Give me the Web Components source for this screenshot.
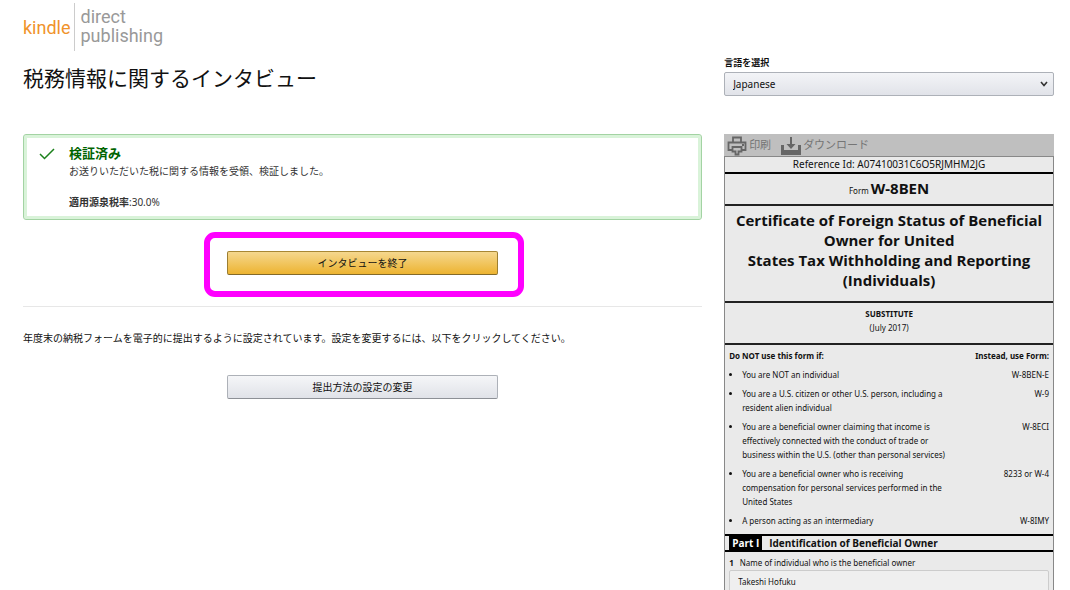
<!DOCTYPE html>
<html lang="ja">
<head>
<meta charset="utf-8">
<title>税務情報に関するインタビュー</title>
<style>
  html {
    scrollbar-width: none;
  }

  body {
    margin: 0;
    background: #fff;
    color: #111;
    font: 10px/14px "Noto Sans", "Noto Sans CJK JP", sans-serif;
  }
</style>
</head>
<body>
<tax-interview>
  <kdp-logo slot="logo"></kdp-logo>
  <span slot="title">税務情報に関するインタビュー</span>
  <language-select slot="language" label="言語を選択"></language-select>

  <status-box heading="検証済み">
    お送りいただいた税に関する情報を受領、検証しました。
    <span slot="detail"><b>適用源泉税率</b>:30.0%</span>
  </status-box>
  <action-button kind="primary" marked>インタビューを終了</action-button>
  <section-note>年度末の納税フォームを電子的に提出するように設定されています。設定を変更するには、以下をクリックしてください。</section-note>
  <action-button>提出方法の設定の変更</action-button>

  <form-toolbar slot="form"></form-toolbar>
  <form-preview slot="form"></form-preview>
</tax-interview>

<script>
class KdpLogo extends HTMLElement {
  constructor() {
    super();
    this.attachShadow({ mode: "open" });
  }

  connectedCallback() {
    this.shadowRoot.innerHTML = `
    <style>
      :host {
        display: flex;
        align-items: center;
        height: 48px;
        font-family: Roboto, sans-serif;
        font-size: 18px;
        line-height: 19px;
        color: #999;
      }

      .kindle {
        color: #f0932b;
        padding-right: 3px;
      }

      .rest {
        box-sizing: border-box;
        height: 48px;
        border-left: 1px solid #ccc;
        padding: 4px 0 0 6px;
      }
    </style>
    <span class="kindle">kindle</span>
    <span class="rest">direct<br>publishing</span>
  `;
  }
}

class LanguageSelect extends HTMLElement {
  constructor() {
    super();
    this.attachShadow({ mode: "open" });
  }

  connectedCallback() {
    this.shadowRoot.innerHTML = `
    <style>
      :host {
        display: block;
        padding-top: 1px;
      }

      label {
        display: block;
        font-size: 9px;
        font-weight: bold;
        margin-bottom: 2px;
      }

      .wrap {
        display: grid;
        align-items: center;
      }

      select, svg {
        grid-area: 1 / 1;
      }

      select {
        appearance: none;
        box-sizing: border-box;
        width: 100%;
        height: 24px;
        padding: 0 8px;
        border: 1px solid #adb1b8;
        border-radius: 2px;
        background: linear-gradient(#f3f4f7, #e1e3e9);
        color: #111;
        font: inherit;
      }

      svg {
        justify-self: end;
        margin-right: 6px;
        pointer-events: none;
      }
    </style>
    <label for="lang">${this.getAttribute("label")}</label>
    <div class="wrap">
      <select id="lang"><option>Japanese</option></select>
      <svg width="8" height="6" viewBox="0 0 8 6"><path d="M1 1l3 3.5L7 1" fill="none" stroke="#333" stroke-width="1.6"/></svg>
    </div>
  `;
  }
}

class StatusBox extends HTMLElement {
  constructor() {
    super();
    this.attachShadow({ mode: "open" });
  }

  connectedCallback() {
    this.shadowRoot.innerHTML = `
    <style>
      :host {
        display: flex;
        gap: 14px;
        box-sizing: border-box;
        padding: 8px 15px 10px;
        border: 1px solid #a3d3a3;
        border-radius: 3px;
        box-shadow: inset 0 0 0 3px #d9f3d9;
      }

      svg {
        margin-top: 5px;
      }

      h2 {
        margin: 0;
        font-size: 13px;
        line-height: 20px;
        color: #006400;
      }

      p {
        margin: 0 0 16px;
        line-height: 16px;
      }

      p, div {
        color: #333;
      }
    </style>
    <svg width="16" height="12" viewBox="0 0 16 12"><path d="M1 6l4.500 4.500L15 1" fill="none" stroke="#1b801b" stroke-width="1.500"/></svg>
    <section>
      <h2>${this.getAttribute("heading")}</h2>
      <p><slot></slot></p>
      <div><slot name="detail"></slot></div>
    </section>
  `;
  }
}

class ActionButton extends HTMLElement {
  constructor() {
    super();
    this.attachShadow({ mode: "open" });
  }

  connectedCallback() {
    this.shadowRoot.innerHTML = `
    <style>
      :host {
        display: block;
        position: relative;
        width: 40%;
        margin: 0 auto;
      }

      button {
        display: block;
        box-sizing: border-box;
        width: 100%;
        height: 24px;
        padding: 0;
        border: 1px solid #adb1b8;
        border-bottom-color: #8d9096;
        border-radius: 2px;
        background: linear-gradient(#f5f6f8, #e0e2e8);
        color: #111;
        font: inherit;
      }

      :host([kind="primary"]) button {
        border-color: #a88734 #9c7e31 #846a29;
        background: linear-gradient(#f5d78e, #edb431);
      }

      /* highlighter frame drawn over the page around the button */
      :host([marked])::after {
        content: "";
        position: absolute;
        inset: -19px -26px -22px -23px;
        border: 6px solid #f0f;
        border-radius: 11px;
        pointer-events: none;
      }
    </style>
    <button type="button"><slot></slot></button>
  `;
  }
}

class SectionNote extends HTMLElement {
  constructor() {
    super();
    this.attachShadow({ mode: "open" });
  }

  connectedCallback() {
    this.shadowRoot.innerHTML = `
    <style>
      :host {
        display: block;
        margin: 31px 0 30px;
        padding-top: 24px;
        border-top: 1px solid #e7e7e7;
      }
    </style>
    <slot></slot>
  `;
  }
}

class FormToolbar extends HTMLElement {
  constructor() {
    super();
    this.attachShadow({ mode: "open" });
  }

  connectedCallback() {
    this.shadowRoot.innerHTML = `
    <style>
      :host {
        display: flex;
        gap: 10px;
        height: 22px;
        padding-left: 3px;
        background: #bfbfbf;
      }

      a {
        display: flex;
        gap: 2px;
        color: #757575;
        font-size: 11px;
        line-height: 21px;
        text-decoration: none;
      }

      svg {
        margin-top: 2px;
      }
    </style>
    <a href="#print">
      <svg width="20" height="20" viewBox="0 0 20 20" fill="none" stroke="#666" stroke-width="1.800">
        <path d="M6 6V1.500h8V6M5.500 14H1.500V6.500h17V14H14M5.500 11h9v4.500H11.500V18.500h-3V15.500h-3z"/>
        <path d="M15 9h2"/>
      </svg>印刷</a>
    <a href="#download">
      <svg width="20" height="20" viewBox="0 0 20 20" fill="#666">
        <path d="M0 9h3v5h14V9h3v10H0zM9 1h2v7h3.500L10 13 5.500 8H9z"/>
      </svg>ダウンロード</a>
  `;
  }
}

class FormPreview extends HTMLElement {
  constructor() {
    super();
    this.attachShadow({ mode: "open" });
    this.rows = [
      ["You are NOT an individual", "W-8BEN-E"],
      ["You are a U.S. citizen or other U.S. person, including a resident alien individual", "W-9"],
      ["You are a beneficial owner claiming that income is effectively connected with the conduct of trade or business within the U.S. (other than personal services)", "W-8ECI"],
      ["You are a beneficial owner who is receiving compensation for personal services performed in the United States", "8233 or W-4"],
      ["A person acting as an intermediary", "W-8IMY"],
    ];
  }

  connectedCallback() {
    const rows = this.rows
      .map(([text, form]) => `<tr><td><ul><li>${text}</li></ul></td><td>${form}</td></tr>`)
      .join("");

    this.shadowRoot.innerHTML = `
    <style>
      :host {
        display: block;
        border: 1px solid #888;
        background: #eaeaea;
        color: #111;
        font-size: 8px;
      }

      .ref, .form, h2, .sub {
        margin: 0;
        text-align: center;
        border-bottom: 2px solid #222;
      }

      .ref {
        font-size: 10px;
        line-height: 15px;
        border-color: #000;
      }

      .form {
        padding: 3px 0 2px;
        line-height: 22px;
      }

      .form b {
        font-size: 15px;
      }

      h2 {
        padding: 4px 8px 11px;
        font-family: "Open Sans", sans-serif;
        font-size: 15px;
        line-height: 20px;
      }

      .sub {
        padding: 4px 0 8px;
      }

      .sub b, .sub span {
        display: block;
      }

      table {
        width: 100%;
        border-collapse: collapse;
        margin: 1px 0 4px;
      }

      th, td {
        padding: 3px 4px 2px;
        vertical-align: top;
        text-align: left;
      }

      th:last-child, td:last-child {
        width: 30%;
        text-align: right;
        white-space: nowrap;
      }

      ul {
        margin: 0;
        padding-left: 13px;
      }

      .part {
        display: flex;
        gap: 7px;
        margin: 0;
        padding-left: 4px;
        border: solid #000;
        border-width: 2px 0;
        font-family: "Open Sans", sans-serif;
        font-size: 10px;
        line-height: 14px;
      }

      .part span {
        padding: 0 3px;
        background: #000;
        color: #fff;
      }

      label {
        display: block;
        padding: 4px 4px 0;
      }

      label b {
        margin-right: 4px;
      }

      .field {
        padding: 0 4px 6px;
      }

      input {
        display: block;
        box-sizing: border-box;
        width: 100%;
        height: 22px;
        padding: 0 8px;
        border: 1px solid #ccc;
        border-radius: 2px;
        background: #efefef;
        color: #111;
        font: inherit;
      }
    </style>
    <div class="ref">Reference Id: A07410031C6O5RJMHM2JG</div>
    <div class="form">Form <b>W-8BEN</b></div>
    <h2>Certificate of Foreign Status of Beneficial Owner for United<br>States Tax Withholding and Reporting (Individuals)</h2>
    <div class="sub"><b>SUBSTITUTE</b><span>(July 2017)</span></div>
    <table>
      <thead><tr><th>Do NOT use this form if:</th><th>Instead, use Form:</th></tr></thead>
      <tbody>${rows}</tbody>
    </table>
    <h3 class="part"><span>Part I</span>Identification of Beneficial Owner</h3>
    <label for="owner"><b>1</b> Name of individual who is the beneficial owner</label>
    <div class="field"><input id="owner" value="Takeshi Hofuku" readonly></div>
  `;
  }
}

class TaxInterview extends HTMLElement {
  constructor() {
    super();
    this.attachShadow({ mode: "open" });
  }

  connectedCallback() {
    this.shadowRoot.innerHTML = `
    <style>
      :host {
        display: block;
        padding: 3px 16px 0 23px;
      }

      .head, .body {
        display: grid;
        grid-template-columns: 35fr 17fr;
        column-gap: 22px;
      }

      .head {
        margin-top: 4px;
      }

      h1 {
        margin: 9px 0 0;
        font-size: 21px;
        font-weight: normal;
        line-height: 28px;
      }

      .body {
        margin-top: 38px;
        align-items: start;
      }

      main {
        display: flow-root;
      }

      main ::slotted(status-box) {
        margin-bottom: 31px;
      }
    </style>
    <slot name="logo"></slot>
    <div class="head">
      <h1><slot name="title"></slot></h1>
      <slot name="language"></slot>
    </div>
    <div class="body">
      <main><slot></slot></main>
      <aside><slot name="form"></slot></aside>
    </div>
  `;
  }
}

customElements.define("kdp-logo", KdpLogo);
customElements.define("language-select", LanguageSelect);
customElements.define("status-box", StatusBox);
customElements.define("action-button", ActionButton);
customElements.define("section-note", SectionNote);
customElements.define("form-toolbar", FormToolbar);
customElements.define("form-preview", FormPreview);
customElements.define("tax-interview", TaxInterview);
</script>
</body>
</html>
